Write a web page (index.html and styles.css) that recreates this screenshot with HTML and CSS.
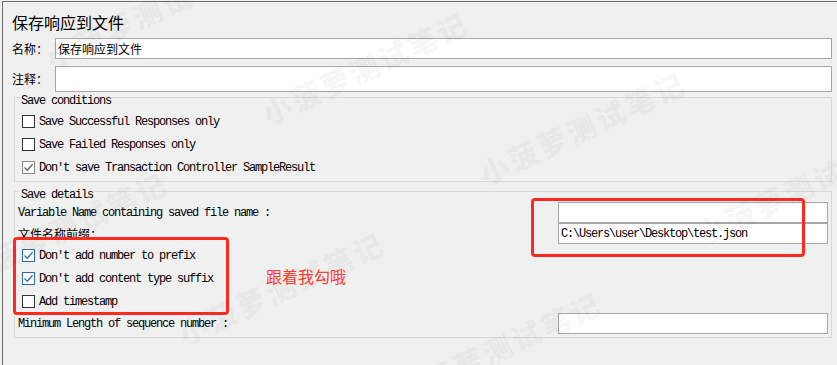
FILE: index.html
```html
<!DOCTYPE html>
<html>
<head>
  <meta charset="utf-8">
  <title>保存响应到文件</title>
  <link rel="stylesheet" href="styles.css">
</head>
<body>
  <div class="panel">
    <div class="panel-title">保存响应到文件</div>

    <div class="field-row">
      <label class="field-label">名称：</label>
      <input class="text-input" type="text" value="保存响应到文件">
    </div>
    <div class="field-row comment-row">
      <label class="field-label">注释：</label>
      <input class="text-input tall" type="text">
    </div>

    <div class="group">
      <div class="group-title">Save conditions</div>
      <div class="check-row">
        <span class="box"></span>
        <span class="check-text">Save Successful Responses only</span>
      </div>
      <div class="check-row">
        <span class="box"></span>
        <span class="check-text">Save Failed Responses only</span>
      </div>
      <div class="check-row">
        <span class="box checked muted">
          <svg viewBox="0 0 13 13"><path d="M2.5 6.5 L5.2 9.3 L10.6 3.2"/></svg>
        </span>
        <span class="check-text">Don't save Transaction Controller SampleResult</span>
      </div>
    </div>

    <div class="group details">
      <div class="group-title">Save details</div>
      <div class="details-grid">
        <span class="mono-label">Variable Name containing saved file name :</span>
        <input class="text-input mono-input" type="text">

        <span class="cn-label">文件名称前缀：</span>
        <input class="text-input mono-input" type="text" value="C:\Users\user\Desktop\test.json">

        <div class="check-row wide">
          <span class="box checked focus">
            <svg viewBox="0 0 13 13"><path d="M2.5 6.5 L5.2 9.3 L10.6 3.2"/></svg>
          </span>
          <span class="check-text">Don't add number to prefix</span>
        </div>
        <div class="check-row wide">
          <span class="box checked focus">
            <svg viewBox="0 0 13 13"><path d="M2.5 6.5 L5.2 9.3 L10.6 3.2"/></svg>
          </span>
          <span class="check-text">Don't add content type suffix</span>
        </div>
        <div class="check-row wide">
          <span class="box"></span>
          <span class="check-text">Add timestamp</span>
        </div>

        <span class="mono-label">Minimum Length of sequence number :</span>
        <input class="text-input mono-input" type="text">
      </div>
    </div>
  </div>

  <!-- annotations drawn on top of the screenshot -->
  <div class="mark mark-checks"></div>
  <div class="mark mark-inputs"></div>
  <div class="mark-note">跟着我勾哦</div>

  <div class="wm wm-0">小菠萝测试笔记</div>
  <div class="wm wm-1">小菠萝测试笔记</div>
  <div class="wm wm-2">小菠萝测试笔记</div>
  <div class="wm wm-3">小菠萝测试笔记</div>
  <div class="wm wm-5">小菠萝测试笔记</div>
  <div class="wm wm-6">小菠萝测试笔记</div>
  <div class="wm wm-7">小菠萝测试笔记</div>
</body>
</html>
```

FILE: styles.css
```css
:root {
  --bg-color: #f0f0f0;
  --frame-color: #707070;
  --input-border: #a6a6a6;
  --group-border: #d9d9d9;
  --mark-color: #ff2a1f;
}

body {
  margin: 0;
  height: 365px;
  overflow: hidden;
  position: relative;
  background-color: var(--bg-color);
  font-family: "Noto Sans CJK SC", "Liberation Sans", sans-serif;
  font-size: 12px;
  color: #000;
}

.panel {
  margin: 1px 0 0 2px;
  height: 364px;
  box-sizing: border-box;
  border-top: 1px solid var(--frame-color);
  border-left: 1px solid var(--frame-color);
  padding: 10px 5px 0 9px;
}

.panel-title {
  font-size: 16px;
  line-height: 20px;
  height: 20px;
}

.field-row {
  display: flex;
  align-items: center;
  margin-top: 6px;
}

.comment-row {
  margin-top: 7px;
}

.field-label {
  flex: none;
  width: 43px;
  line-height: 16px;
}

.text-input {
  flex: 1;
  min-width: 0;
  height: 21px;
  box-sizing: border-box;
  margin: 0;
  padding: 0 2px;
  border: 1px solid var(--input-border);
  border-radius: 0;
  background: #fff;
  font-family: "Noto Sans CJK SC", sans-serif;
  font-size: 12px;
  color: #000;
  outline: none;
}

.text-input.tall {
  height: 26px;
}

/* titled boxes */
.group {
  margin: 5px 0 0 2px;
  border: 1px solid var(--group-border);
  padding: 0 3px 2px 3px;
}

.group.details {
  margin-top: 9px;
  padding-bottom: 3px;
}

.group-title,
.check-text,
.mono-label,
.mono-input {
  font-family: "Liberation Mono", monospace;
  font-size: 12px;
  letter-spacing: -1.2px;
  white-space: nowrap;
}

.group-title {
  width: fit-content;
  margin: -3px 0 0 2px;
  padding: 0 1px;
  height: 12px;
  line-height: 12px;
  background-color: var(--bg-color);
}

.group-title + .check-row {
  margin-top: 3px;
}

.check-row {
  display: flex;
  align-items: center;
  height: 23px;
  padding-left: 4px;
}

.check-text {
  line-height: 14px;
}

.box {
  flex: none;
  width: 13px;
  height: 13px;
  box-sizing: border-box;
  margin-right: 4px;
  border: 1px solid #333;
  background: #fff;
  position: relative;
}

.box svg {
  position: absolute;
  left: -1px;
  top: -1px;
  width: 13px;
  height: 13px;
  fill: none;
  stroke-width: 1.3;
}

.box.muted {
  border-color: #8a8a8a;
}

.box.muted svg {
  stroke: #5e5e5e;
}

.box.focus {
  border-color: #2d6db3;
}

.box.focus svg {
  stroke: #2d6db3;
}

.details-grid {
  display: grid;
  grid-template-columns: 1fr 270px;
  grid-template-rows: 21px 21px 23px 23px 23px 21px;
  align-items: center;
  margin-top: 1px;
}

.check-row.wide {
  grid-column: 1 / -1;
}

.cn-label {
  line-height: 16px;
}

.mono-input {
  width: 270px;
  padding: 0 2px;
}

/* red annotation boxes */
.mark {
  position: absolute;
  box-sizing: border-box;
  border: 3px solid var(--mark-color);
  border-radius: 4px;
}

.mark-checks {
  left: 13px;
  top: 237px;
  width: 216px;
  height: 78px;
}

.mark-inputs {
  left: 531px;
  top: 198px;
  width: 274px;
  height: 59px;
}

.mark-note {
  position: absolute;
  left: 266px;
  top: 268px;
  font-size: 16px;
  line-height: 16px;
  color: #ff3a2f;
}

/* watermark */
.wm {
  position: absolute;
  transform: translate(-50%, -50%) rotate(-25deg);
  font-family: "Noto Sans CJK SC", sans-serif;
  font-weight: 900;
  font-size: 29px;
  letter-spacing: 3px;
  line-height: 32px;
  white-space: nowrap;
  color: rgba(0, 0, 0, 0.05);
  pointer-events: none;
}

.wm-0 { left: 148px; top: 12px; }
.wm-1 { left: 365px; top: 67px; }
.wm-2 { left: 582px; top: 127px; }
.wm-3 { left: 799px; top: 187px; }
.wm-5 { left: 498px; top: 347px; }
.wm-6 { left: 281px; top: 287px; }
.wm-7 { left: 64px; top: 227px; }
```
